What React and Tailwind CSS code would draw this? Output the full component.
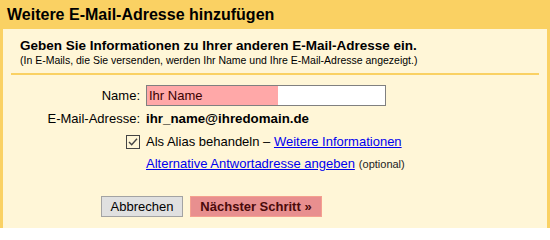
import React from 'react';

const font = { fontFamily: '"Liberation Sans", Arial, sans-serif' };

const App = () => {
  return (
    <div className="w-[550px] h-[228px] bg-[#fad163] flex flex-col overflow-hidden" style={font}>
      <div className="h-[29px] pl-[7px] pt-[5px] text-[16px] leading-[20px] font-bold text-black">
        Weitere E-Mail-Adresse hinzufügen
      </div>
      <div className="flex-1 ml-[3px] mr-[3px] bg-[#fff6d7] pt-[9px] px-[8px]">
        <div className="pl-[9px]">
          <div className="text-[13.5px] leading-[16px] font-bold text-black">
            Geben Sie Informationen zu Ihrer anderen E-Mail-Adresse ein.
          </div>
          <div className="text-[10.5px] leading-[12px] text-black">
            (In E-Mails, die Sie versenden, werden Ihr Name und Ihre E-Mail-Adresse angezeigt.)
          </div>
        </div>
        <div className="mt-[7px] h-[2px] bg-[#fad163] w-[528px]" />

        <div className="mt-[10px] grid grid-cols-[129px_1fr] gap-x-[6px] text-[13px] text-black items-center">
          <div className="text-right leading-[21px]">Name:</div>
          <div className="w-[240px] h-[21px] border border-[#808080] bg-white flex">
            <div className="w-[131px] h-full bg-[#ffa8a8] pl-[2px] leading-[19px] text-[#3a0000]">
              Ihr Name
            </div>
          </div>

          <div className="text-right leading-[23px] mt-[1px]">E-Mail-Adresse:</div>
          <div className="font-bold text-[13.3px] leading-[23px] mt-[1px]">ihr_name@ihredomain.de</div>

          <div className="flex justify-end items-center leading-[23px]">
            <svg width="14" height="14" viewBox="0 0 14 14">
              <rect x="0.5" y="0.5" width="13" height="13" fill="#fff6d7" stroke="#444" />
              <path d="M3 7 L5.7 9.8 L11 3.8" fill="none" stroke="#444" strokeWidth="1.4" />
            </svg>
          </div>
          <div className="leading-[23px]">
            Als Alias behandeln –{' '}
            <a href="#" className="text-[#0000ee] underline">Weitere Informationen</a>
          </div>

          <div />
          <div className="leading-[22px]">
            <a href="#" className="text-[#0000ee] underline">Alternative Antwortadresse angeben</a>
            <span className="text-[11px] text-[#222] ml-[4px]">(optional)</span>
          </div>
        </div>

        <div className="mt-[21px] flex gap-[7px] pl-[90px]">
          <button className="w-[82px] h-[21px] bg-[#e0e0e0] border border-[#a3a3a3] text-[13px] leading-[19px] text-black">
            Abbrechen
          </button>
          <button className="w-[132px] h-[21px] bg-[#e88f8f] border border-[#f5a08f] text-[13px] leading-[19px] font-bold text-[#4a0a0a]">
            Nächster Schritt »
          </button>
        </div>
      </div>
    </div>
  );
};

export default App;
